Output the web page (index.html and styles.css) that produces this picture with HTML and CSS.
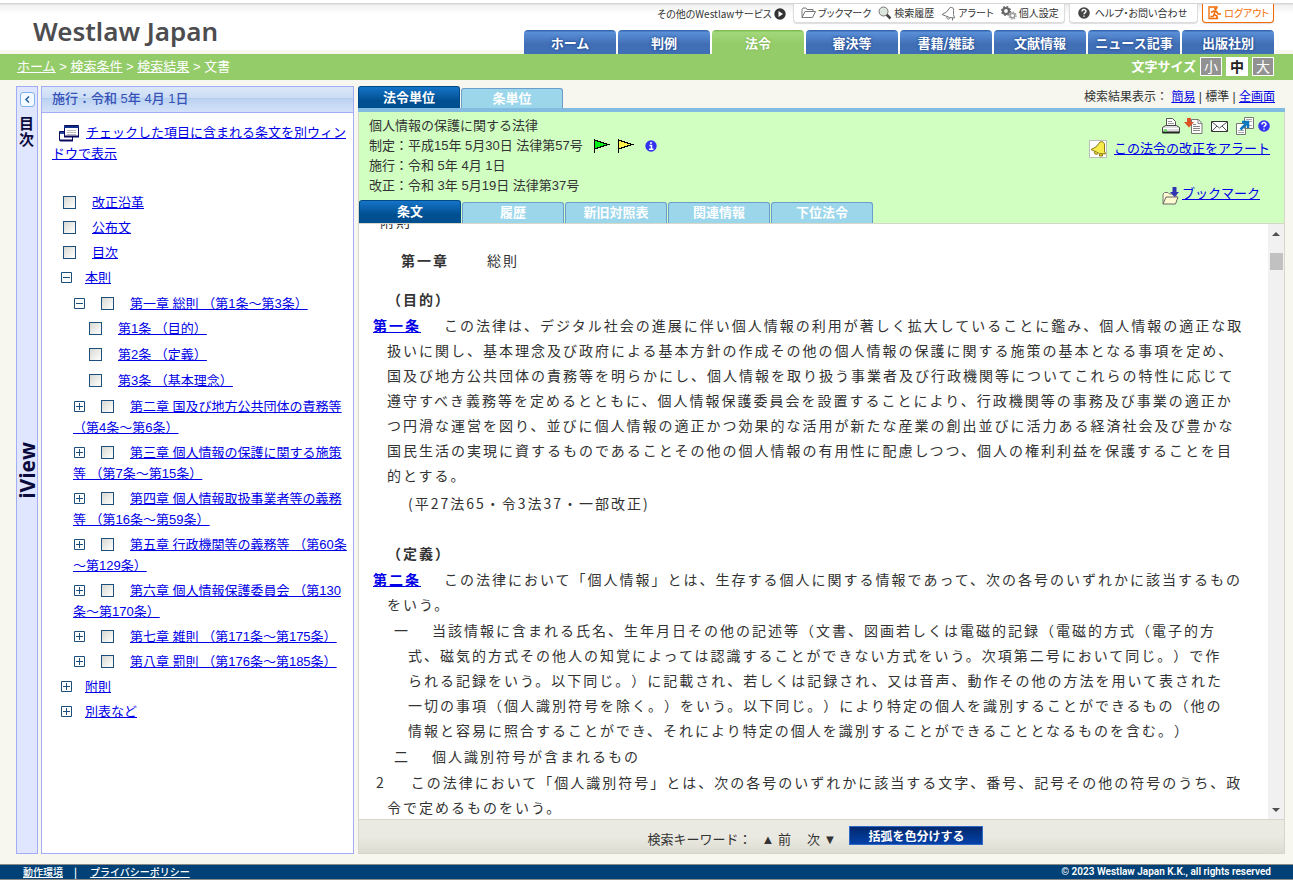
FILE: index.html
```html
<!DOCTYPE html>
<html lang="ja">
<head>
<meta charset="utf-8">
<title>Westlaw Japan</title>
<link rel="stylesheet" href="styles.css">
</head>
<body>
<svg class="sprite" aria-hidden="true">
  <symbol id="plus" viewBox="0 0 11 11"><path d="M.5.5h10v10H.5zM2 5.5h7M5.5 2v7" fill="none" stroke="#1d4f7c"/></symbol>
  <symbol id="minus" viewBox="0 0 11 11"><path d="M.5.5h10v10H.5zM2 5.5h7" fill="none" stroke="#1d4f7c"/></symbol>
  <symbol id="flag" viewBox="0 0 17 14"><path d="M1 1.5 15.5 5.5 1 9.5z" fill="currentColor"/><path d="M.5 0v14M1 1.5h3M3 2.5h4M6 3.5h4M9 4.5h4M12 5.5h4M9 6.500h4M6 7.500h4M3 8.500h4M1 9.500h3" fill="none" stroke="#000"/></symbol>
</svg>

<header class="header">
  <a class="logo" href="#">Westlaw Japan</a>
  <div class="header-right">
    <div class="tools">
      <a class="service" href="#">その他のWestlawサービス<svg width="12" height="12" viewBox="0 0 12 12"><circle cx="6" cy="6" r="5.700" fill="#333"/><path d="M4.500 3v6L9 6z" fill="#fff"/></svg></a>
      <div class="tool-group">
        <a href="#"><svg width="15" height="12" viewBox="0 0 15 12"><path d="M1 10.500V2.500L2 1h3l1 1.500h6V4.500M1 10.500 4 4.500h10.500l-3 6z" fill="#fff" stroke="#777"/></svg>ブックマーク</a>
        <a href="#"><svg width="14" height="14" viewBox="0 0 14 14"><path d="m8 8 4.500 4.500" stroke="#444" stroke-width="2.500"/><circle cx="5.500" cy="5.500" r="4.500" fill="#dde6dc" stroke="#777"/></svg>検索履歴</a>
        <a href="#"><svg width="15" height="15" viewBox="0 0 15 15"><path d="M9 1.500c2.500-.6 4 .8 3.500 3v4l1 3.500-5-.500L1 8.500 5.500 6z" fill="#fff" stroke="#777"/><path d="M6 10.500c-1 2.500 2 3.500 3 1.500M11.500 12v2.500" fill="none" stroke="#777"/></svg>アラート</a>
        <a href="#"><svg width="16" height="14" viewBox="0 0 16 14"><circle cx="5" cy="5" r="3" fill="none" stroke="#666" stroke-width="2.200"/><circle cx="5" cy="5" r="4.400" fill="none" stroke="#666" stroke-width="1.400" stroke-dasharray="1.800 1.650"/><circle cx="11.500" cy="9.500" r="2.300" fill="#fff" stroke="#999" stroke-width="1.600"/><circle cx="11.500" cy="9.500" r="3.600" fill="none" stroke="#999" stroke-width="1.200" stroke-dasharray="1.500 1.300"/></svg>個人設定</a>
      </div>
      <div class="tool-group">
        <a class="help-link" href="#"><svg width="12" height="12" viewBox="0 0 12 12"><circle cx="6" cy="6" r="5.800" fill="#444"/><path d="M4 4.600c0-2.800 4-2.600 4-.3C8 5.700 6 5.500 6 7.300M6 8.400v1.400" fill="none" stroke="#fff" stroke-width="1.400"/></svg>ヘルプ・お問い合わせ</a>
      </div>
      <div class="tool-group logout">
        <a href="#"><svg width="14" height="14" viewBox="0 0 14 14"><path d="M9 2.500V1H1v11.500h8V11" fill="none" stroke="#f26a00" stroke-width="1.300"/><circle cx="7.500" cy="3" r="1.400" fill="#f26a00"/><path d="M3 6.500 5.500 5l3 .500L10 8h3M7 5.500 6 8.500l3 1.500.5 3M6 8.500l-1 2H2.500" fill="none" stroke="#f26a00" stroke-width="1.500"/></svg>ログアウト</a>
      </div>
    </div>
    <nav class="nav">
      <a href="#">ホーム</a><a href="#">判例</a><a class="current" href="#">法令</a><a href="#">審決等</a><a href="#">書籍/雑誌</a><a href="#">文献情報</a><a href="#">ニュース記事</a><a href="#">出版社別</a>
    </nav>
  </div>
</header>

<div class="crumb-bar">
  <nav class="crumbs"><a href="#">ホーム</a> &gt; <a href="#">検索条件</a> &gt; <a href="#">検索結果</a> &gt; 文書</nav>
  <div class="text-size"><span>文字サイズ</span><button type="button">小</button><button type="button" class="on">中</button><button type="button">大</button></div>
</div>

<main class="main">
  <div class="rail">
    <button type="button" class="collapse" aria-label="目次を閉じる"><svg width="7" height="9" viewBox="0 0 7 9"><path d="M5 1.500 2 4.500l3 3" fill="none" stroke="#24609c" stroke-width="1.500"/></svg></button>
    <span class="rail-title">目次</span>
    <span class="rail-name">iView</span>
  </div>

  <aside class="toc">
    <h2 class="toc-head">施行：令和 5年 4月 1日</h2>
    <div class="toc-body">
      <p class="open-window"><svg width="20" height="17" viewBox="0 0 20 17"><path d="M.5 6.500h13v9H.5z" fill="#fff" stroke="#0a0a5c"/><path d="M1 7h12v2H1z" fill="#2748a8"/><path d="M1 15.500h13" stroke="#0a0a5c" stroke-width="2"/><path d="M5.500.5h14v11h-14z" fill="#fff" stroke="#0a0a5c"/><path d="M5 1h15v2H5z" fill="#10308c"/><path d="M5 11.500h15" stroke="#0a0a5c" stroke-width="2"/><path d="M8 5.500h9M8 7.500h9M8 9.500h9" stroke="#bbb"/></svg><a href="#">チェックした項目に含まれる条文を別ウィンドウで表示</a></p>
      <ul class="tree">
        <li class="leaf"><input type="checkbox" aria-label="改正沿革"><a href="#">改正沿革</a></li>
        <li class="leaf"><input type="checkbox" aria-label="公布文"><a href="#">公布文</a></li>
        <li class="leaf"><input type="checkbox" aria-label="目次"><a href="#">目次</a></li>
        <li class="part"><button type="button" aria-label="閉じる"><svg><use href="#minus"/></svg></button><a href="#">本則</a></li>
        <li>
          <ul class="chapters">
            <li><button type="button" aria-label="閉じる"><svg><use href="#minus"/></svg></button><input type="checkbox" aria-label="第一章"><a href="#">第一章 総則 （第1条～第3条）</a></li>
            <li class="articles">
              <ul>
                <li><input type="checkbox" aria-label="第1条"><a href="#">第1条 （目的）</a></li>
                <li><input type="checkbox" aria-label="第2条"><a href="#">第2条 （定義）</a></li>
                <li><input type="checkbox" aria-label="第3条"><a href="#">第3条 （基本理念）</a></li>
              </ul>
            </li>
            <li><button type="button" aria-label="開く"><svg><use href="#plus"/></svg></button><input type="checkbox" aria-label="第二章"><a href="#">第二章 国及び地方公共団体の責務等 （第4条～第6条）</a></li>
            <li><button type="button" aria-label="開く"><svg><use href="#plus"/></svg></button><input type="checkbox" aria-label="第三章"><a href="#">第三章 個人情報の保護に関する施策等 （第7条～第15条）</a></li>
            <li><button type="button" aria-label="開く"><svg><use href="#plus"/></svg></button><input type="checkbox" aria-label="第四章"><a href="#">第四章 個人情報取扱事業者等の義務等 （第16条～第59条）</a></li>
            <li><button type="button" aria-label="開く"><svg><use href="#plus"/></svg></button><input type="checkbox" aria-label="第五章"><a href="#">第五章 行政機関等の義務等 （第60条～第129条）</a></li>
            <li><button type="button" aria-label="開く"><svg><use href="#plus"/></svg></button><input type="checkbox" aria-label="第六章"><a href="#">第六章 個人情報保護委員会 （第130条～第170条）</a></li>
            <li><button type="button" aria-label="開く"><svg><use href="#plus"/></svg></button><input type="checkbox" aria-label="第七章"><a href="#">第七章 雑則 （第171条～第175条）</a></li>
            <li><button type="button" aria-label="開く"><svg><use href="#plus"/></svg></button><input type="checkbox" aria-label="第八章"><a href="#">第八章 罰則 （第176条～第185条）</a></li>
          </ul>
        </li>
        <li class="part"><button type="button" aria-label="開く"><svg><use href="#plus"/></svg></button><a href="#">附則</a></li>
        <li class="part"><button type="button" aria-label="開く"><svg><use href="#plus"/></svg></button><a href="#">別表など</a></li>
      </ul>
    </div>
  </aside>

  <section class="document">
    <div class="unit-row">
      <nav class="tabs"><a class="current" href="#">法令単位</a><a href="#">条単位</a></nav>
      <p class="view-mode">検索結果表示： <a href="#">簡易</a> | 標準 | <a href="#">全画面</a></p>
    </div>
    <div class="panel">
      <div class="law">
        <div class="law-info">
          <p>個人情報の保護に関する法律</p>
          <p class="enacted"><span>制定：平成15年 5月30日 法律第57号</span><svg class="flag green" width="17" height="14"><use href="#flag"/></svg><svg class="flag yellow" width="17" height="14"><use href="#flag"/></svg><svg class="info" width="12" height="12" viewBox="0 0 12 12"><circle cx="6" cy="6" r="5.700" fill="#3232f0"/><path d="M6 2v2M4.500 5.500H6.500V9M4 9.300h4.500" fill="none" stroke="#fff" stroke-width="1.500"/></svg></p>
          <p>施行：令和 5年 4月 1日</p>
          <p>改正：令和 3年 5月19日 法律第37号</p>
        </div>
        <div class="law-tools">
          <div class="icon-row">
            <button type="button" aria-label="印刷"><svg width="18" height="16" viewBox="0 0 18 16"><path d="M4.500 8.500V.5h6l3 3v5" fill="#fff" stroke="#555"/><path d="M6 3.500h4M6 5.500h6M6 7.500h6" stroke="#999"/><path d="m.5 9.500 3-2h11l3 2v5H.5z" fill="#ddd" stroke="#444"/><path d="M.5 14.500h17" stroke="#222" stroke-width="2"/><path d="M1 10.500h16" stroke="#fff"/><path d="M2 12.500h3" stroke="#4fe04f" stroke-width="2"/></svg></button>
            <button type="button" aria-label="保存"><svg width="19" height="16" viewBox="0 0 19 16"><path d="M7.500 1.500h7l3.500 4v10H7.500z" fill="#fff" stroke="#777"/><path d="M14 1.500v4h4M9 6.500h3M9 8.500h7M9 10.500h7M9 12.500h7" fill="none" stroke="#888"/><path d="M3 0h4v4h3L5 9.500 0 4h3z" fill="#dd5128"/></svg></button>
            <button type="button" class="mail" aria-label="メール"><svg width="17" height="11" viewBox="0 0 17 11"><path d="M.5.5h16v10H.5z" fill="#fff" stroke="#333"/><path d="m1 1 7.500 6L16 1M1 10l5-5M16 10l-5-5" fill="none" stroke="#555"/></svg></button>
            <button type="button" aria-label="別ウィンドウ"><svg width="18" height="18" viewBox="0 0 18 18"><path d="M.5 6.500h9v11h-9zM8.500.5h9v11h-9z" fill="#fff" stroke="#777"/><path d="M10 2.500h6M10 4.500h6M12 8.500h4M2 13.500h6M2 15.500h6" stroke="#aaa"/><path d="m4.500 12.500 6-6M6 5h6v6" fill="none" stroke="#0877bd" stroke-width="2.500"/></svg></button>
            <button type="button" aria-label="ヘルプ"><svg width="12" height="12" viewBox="0 0 12 12"><circle cx="6" cy="6" r="5.800" fill="#3434f2"/><path d="M4 4.600c0-2.800 4-2.600 4-.3C8 5.700 6 5.500 6 7.300M6 8.400v1.400" fill="none" stroke="#fff" stroke-width="1.500"/></svg></button>
          </div>
          <a class="alert-link" href="#"><svg width="18" height="18" viewBox="0 0 18 18"><path d="M.5.5h17v17H.5z" fill="#fff" stroke="#bbb"/><path d="M11 2c3-1 5 1 4.500 4v5l1 3-6-.500L2 9.500 7 7z" fill="#f6ed4c" stroke="#8c7a14"/><path d="M5.500 11.500c-1 3 2.500 3.500 3.500 2M10.500 14v2h3v-2" fill="#d8c92c" stroke="#8c7a14"/></svg><span>この法令の改正をアラート</span></a>
          <a class="bookmark-link" href="#"><svg width="17" height="18" viewBox="0 0 17 18"><path d="M1 17V7l1.500-1.500H6L7.500 7H14v3" fill="#fffbd0" stroke="#777"/><path d="m1 17 3-7h12l-2.500 7z" fill="#fffbd0" stroke="#666"/><path d="M10.500 0h4v5h2.500l-4.500 5L8 5h2.500z" fill="#3034b0"/></svg><span>ブックマーク</span></a>
        </div>
        <nav class="tabs sub-tabs"><a class="current" href="#">条文</a><a href="#">履歴</a><a href="#">新旧対照表</a><a href="#">関連情報</a><a href="#">下位法令</a></nav>
      </div>

      <div class="reader">
        <article class="text">
          <p class="previous">附則</p>
          <h3 class="chapter">第一章<span>総則</span></h3>
          <h4 class="caption">（目的）</h4>
          <p class="clause"><a href="#">第一条</a>この法律は、デジタル社会の進展に伴い個人情報の利用が著しく拡大していることに鑑み、個人情報の適正な取扱いに関し、基本理念及び政府による基本方針の作成その他の個人情報の保護に関する施策の基本となる事項を定め、国及び地方公共団体の責務等を明らかにし、個人情報を取り扱う事業者及び行政機関等についてこれらの特性に応じて遵守すべき義務等を定めるとともに、個人情報保護委員会を設置することにより、行政機関等の事務及び事業の適正かつ円滑な運営を図り、並びに個人情報の適正かつ効果的な活用が新たな産業の創出並びに活力ある経済社会及び豊かな国民生活の実現に資するものであることその他の個人情報の有用性に配慮しつつ、個人の権利利益を保護することを目的とする。</p>
          <p class="note">(平27法65・令3法37・一部改正)</p>
          <h4 class="caption">（定義）</h4>
          <p class="clause"><a href="#">第二条</a>この法律において「個人情報」とは、生存する個人に関する情報であって、次の各号のいずれかに該当するものをいう。</p>
          <p class="item"><span>一</span>当該情報に含まれる氏名、生年月日その他の記述等（文書、図画若しくは電磁的記録（電磁的方式（電子的方式、磁気的方式その他人の知覚によっては認識することができない方式をいう。次項第二号において同じ。）で作られる記録をいう。以下同じ。）に記載され、若しくは記録され、又は音声、動作その他の方法を用いて表された一切の事項（個人識別符号を除く。）をいう。以下同じ。）により特定の個人を識別することができるもの（他の情報と容易に照合することができ、それにより特定の個人を識別することができることとなるものを含む。）</p>
          <p class="item"><span>二</span>個人識別符号が含まれるもの</p>
          <p class="clause paragraph"><span>2</span>この法律において「個人識別符号」とは、次の各号のいずれかに該当する文字、番号、記号その他の符号のうち、政令で定めるものをいう。</p>
        </article>
        <div class="scrollbar">
          <svg width="8" height="4" viewBox="0 0 8 4"><path d="M4 0 8 4H0z" fill="#505050"/></svg>
          <div class="thumb"></div>
          <svg width="8" height="4" viewBox="0 0 8 4"><path d="M0 0h8L4 4z" fill="#505050"/></svg>
        </div>
      </div>

      <div class="keyword-bar">
        <span>検索キーワード：</span><span class="prev">▲ 前</span><span class="next">次 ▼</span>
        <button type="button">括弧を色分けする</button>
      </div>
    </div>
  </section>
</main>

<footer class="footer">
  <nav><a href="#">動作環境</a><span>|</span><a href="#">プライバシーポリシー</a></nav>
  <p>© 2023 Westlaw Japan K.K., all rights reserved</p>
</footer>
</body>
</html>
```
FILE: styles.css
```css
* { box-sizing: border-box; }

body {
  margin: 0;
  height: 100vh;
  display: flex;
  flex-direction: column;
  background: #f7f7ef;
  color: #333;
  font: 13px/21px "Liberation Sans", "Noto Sans CJK JP", sans-serif;
  text-spacing-trim: space-all;
}

p, h2, h3, h4, ul { margin: 0; padding: 0; }
ul { list-style: none; }
a { color: #0000e6; }
svg { display: block; flex: none; }
button { font: inherit; padding: 0; border: 0; background: none; }
.sprite { position: absolute; width: 0; height: 0; }

.header {
  display: flex;
  justify-content: space-between;
  flex: none;
  height: 54px;
  padding: 0 19px 0 33px;
  background: linear-gradient(#fff 3px, #d5d5d5 3px, #d5d5d5 4px, #f0f0f0 5px, #fff 14px, #fff 50px, #f7f7ef 50px);
}
.logo {
  padding-top: 15px;
  color: #4d4d50;
  font: 600 26px/32px "Noto Sans", sans-serif;
  text-decoration: none;
}
.header-right {
  display: flex;
  flex-direction: column;
  justify-content: space-between;
  align-items: flex-end;
}
.tools {
  display: flex;
  gap: 4px;
  padding-top: 4px;
  font: 10px/18px "Noto Sans CJK JP", sans-serif;
  font-feature-settings: "palt";
}
.tools a {
  display: flex;
  align-items: center;
  gap: 2px;
  color: #333;
  text-decoration: none;
  white-space: nowrap;
}
.service { margin-right: 3px; }
.tool-group {
  display: flex;
  gap: 7px;
  padding: 0 5px 0 7px;
  background: #fff;
  border: 1px solid #ddd;
  border-top: 0;
  border-radius: 0 0 4px 4px;
  box-shadow: 0 1px 1px #ddd;
}
.tool-group .help-link { gap: 5px; padding: 0 5px 0 1px; }
.logout {
  padding: 0 4px 0 5px;
  border-color: #f26a00;
}
.logout a { color: #f26a00; }
.nav { display: flex; gap: 2px; }
.nav a {
  width: 92px;
  height: 24px;
  border-radius: 4px 4px 0 0;
  background: linear-gradient(#3568b0 1px, #5a90d8 2px, #416fb5 14px, #416fb5);
  color: #fff;
  font: bold 13px/25px "Noto Sans CJK JP", sans-serif;
  text-align: center;
  text-decoration: none;
  text-shadow: 0 0 3px #123a80;
}
.nav .current {
  background: linear-gradient(#7fbc55 1px, #a3d87a 2px, #94cc69 14px);
  text-shadow: 0 0 2px #6aa440;
}

.crumb-bar {
  display: flex;
  justify-content: space-between;
  align-items: center;
  flex: none;
  height: 26px;
  padding: 0 19px 2px 17px;
  background: #94cc69;
  color: #fff;
}
.crumbs a { color: #fff; }
.text-size { display: flex; align-items: center; gap: 4px; font-weight: bold; }
.text-size button {
  width: 22px;
  height: 19px;
  border: 1px solid #fff;
  background: #929292;
  color: #fff;
  font: 14px/17px "Noto Sans CJK JP", sans-serif;
}
.text-size .on { background: #fff; color: #222; font-weight: bold; }

.main {
  display: flex;
  flex: 1;
  min-height: 0;
  padding: 6px 8px 10px 16px;
}
.rail {
  display: grid;
  grid-template-rows: 1fr auto 1fr;
  justify-items: center;
  width: 22px;
  margin-right: 3px;
  border: 1px solid #a3adf7;
  background: #e0e6ff;
  color: #0a0a3c;
}
.collapse {
  grid-area: 1 / 1;
  display: grid;
  place-items: center;
  width: 15px;
  height: 15px;
  margin-top: 5px;
  border: 1px solid #80b4e8;
  border-radius: 3px;
  background: #f2f9ff;
}
.rail-title {
  grid-area: 1 / 1;
  width: 16px;
  margin-top: 28px;
  font: bold 15px/16px "Noto Sans CJK JP", sans-serif;
}
.rail-name {
  grid-area: 2 / 1;
  writing-mode: vertical-rl;
  transform: rotate(180deg);
  font: bold 21px/20px "Open Sans", sans-serif;
}

.toc {
  display: flex;
  flex-direction: column;
  width: 313px;
  margin-right: 4px;
  border: 1px solid #a3adf7;
  background: #fff;
}
.toc-head {
  height: 26px;
  padding: 0 10px;
  border-bottom: 1px solid #a3adf7;
  background: linear-gradient(#dce8f8, #cbdcf5 11px, #aac6ea 11px, #bcd3f2 12px, #d4e1f8);
  color: #3452b8;
  font: 500 13px/24px "Liberation Sans", "Noto Sans CJK JP", sans-serif;
}
.toc-body { padding: 9px 3px 0 10px; }
.open-window { margin-bottom: 28px; }
.open-window svg { display: inline-block; vertical-align: -5px; margin: 0 7px; }
.tree li { margin-bottom: 4px; }
.leaf { padding-left: 11px; }
.part { padding-left: 9px; }
.part button { margin-right: 13px; }
.chapters { padding: 1px 0 0 21px; }
.chapters button { margin: 0 16px 0 1px; }
.chapters input { margin-right: 15px; }
.articles { padding-left: 16px; }
.tree .articles li { margin-bottom: 5px; }
.tree button { width: 11px; height: 11px; vertical-align: -1px; }
.tree button svg { width: 11px; height: 11px; }
.tree input {
  appearance: none;
  width: 13px;
  height: 13px;
  margin: 0 16px 0 0;
  border: 1px solid #1d4f7c;
  background: linear-gradient(135deg, #d8d8d2, #fff);
  vertical-align: -2px;
}

.document { display: flex; flex-direction: column; flex: 1; min-width: 0; }
.unit-row { display: flex; justify-content: space-between; border-bottom: 4px solid #82bce0; }
.view-mode { padding-right: 10px; font-size: 12px; line-height: 22px; }
.tabs { display: flex; align-items: flex-end; gap: 1px; }
.tabs a {
  width: 102px;
  height: 20px;
  border: 1px solid #6a9ccc;
  border-bottom: 0;
  border-radius: 3px 3px 0 0;
  background: #9bd6ea;
  color: #fff;
  font: bold 13px/17px "Noto Sans CJK JP", sans-serif;
  text-align: center;
  text-decoration: none;
}
.tabs .current {
  height: 22px;
  border-color: #004a88;
  background: linear-gradient(#1674c8, #004f90 14px);
  line-height: 19px;
}

.panel {
  display: flex;
  flex-direction: column;
  flex: 1;
  min-height: 0;
  border: solid #d6d6ca;
  border-width: 0 1px;
}
.law {
  display: grid;
  grid-template-columns: 1fr auto;
  background: #d1ffc2;
  border-bottom: 1px solid #d6d6ca;
}
.law-info { padding: 4px 10px; line-height: 20px; }
.enacted { display: flex; align-items: center; }
.flag { margin-right: 7px; }
.enacted span { margin-right: 11px; }
.green { color: #00f018; }
.yellow { color: #fff04c; margin-right: 10px; }
.law-tools {
  display: flex;
  flex-direction: column;
  align-items: flex-end;
  grid-row: 1 / 3;
  grid-column: 2;
  padding: 4px 14px 0 0;
}
.icon-row { display: flex; align-items: center; height: 20px; gap: 4px; }
.mail { margin: 0 4px; }
.law-tools a { display: flex; }
.alert-link { gap: 7px; padding-top: 2px; align-items: center; }
.bookmark-link { gap: 3px; padding: 24px 10px 0 0; align-items: flex-end; }
.bookmark-link span { padding-bottom: 1px; }
.sub-tabs a { height: 21px; }
.sub-tabs .current { height: 23px; }

.reader { display: flex; flex: 1; min-height: 0; overflow: hidden; background: #fff; }
.text {
  flex: 1;
  padding: 0 22px 0 28px;
  font: 14px/25px "Noto Sans CJK JP", sans-serif;
  letter-spacing: 2px;
}
.previous { margin: -15px 0 14px -7px; }
.chapter { margin-bottom: 14px; padding-left: 14px; font-size: 14px; }
.chapter span { margin-left: 38px; font-weight: normal; }
.caption { font-size: 14px; margin-bottom: 1px; }
.clause { margin-bottom: 1px; text-indent: -14px; }
.clause a { margin-right: 23px; font-weight: bold; }
.note { padding: 2px 0 25px 21px; }
.item { margin: 0 17px 1px 21px; text-indent: -14px; }
.item span { margin-right: 22px; }
.paragraph { text-indent: -11px; }
.paragraph span { margin-right: 25px; }

.scrollbar {
  display: flex;
  flex-direction: column;
  align-items: center;
  width: 16px;
  padding: 8px 0 7px;
  background: #f1f1f1;
}
.thumb { width: 13px; height: 17px; margin: 17px 0 auto; background: #c1c1c1; }

.keyword-bar {
  display: flex;
  align-items: center;
  justify-content: center;
  height: 35px;
  padding-right: 12px;
  border: solid #d6d6ca;
  border-width: 1px 0;
  background: linear-gradient(#eaeae2 50%, #dcdcd2);
}
.keyword-bar span { padding-top: 6px; }
.prev { margin: 0 16px 0 10px; }
.keyword-bar button {
  width: 134px;
  height: 19px;
  margin: 0 0 2px 13px;
  border: 1px solid #2f68c4;
  background: linear-gradient(#00296e, #0441a8);
  color: #fff;
  font: bold 12px/17px "Noto Sans CJK JP", sans-serif;
}

.footer {
  display: flex;
  justify-content: space-between;
  flex: none;
  height: 16px;
  padding: 0 22px 0 23px;
  border: solid #8a8a88;
  border-width: 1px 0;
  background: #004277;
  color: #fff;
  font: bold 10px/14px "Noto Sans CJK JP", sans-serif;
}
.footer a { color: #fff; font-weight: 500; }
.footer span { padding: 0 13px 0 11px; }
.footer p { font-family: Roboto, sans-serif; font-weight: 600; }
```
